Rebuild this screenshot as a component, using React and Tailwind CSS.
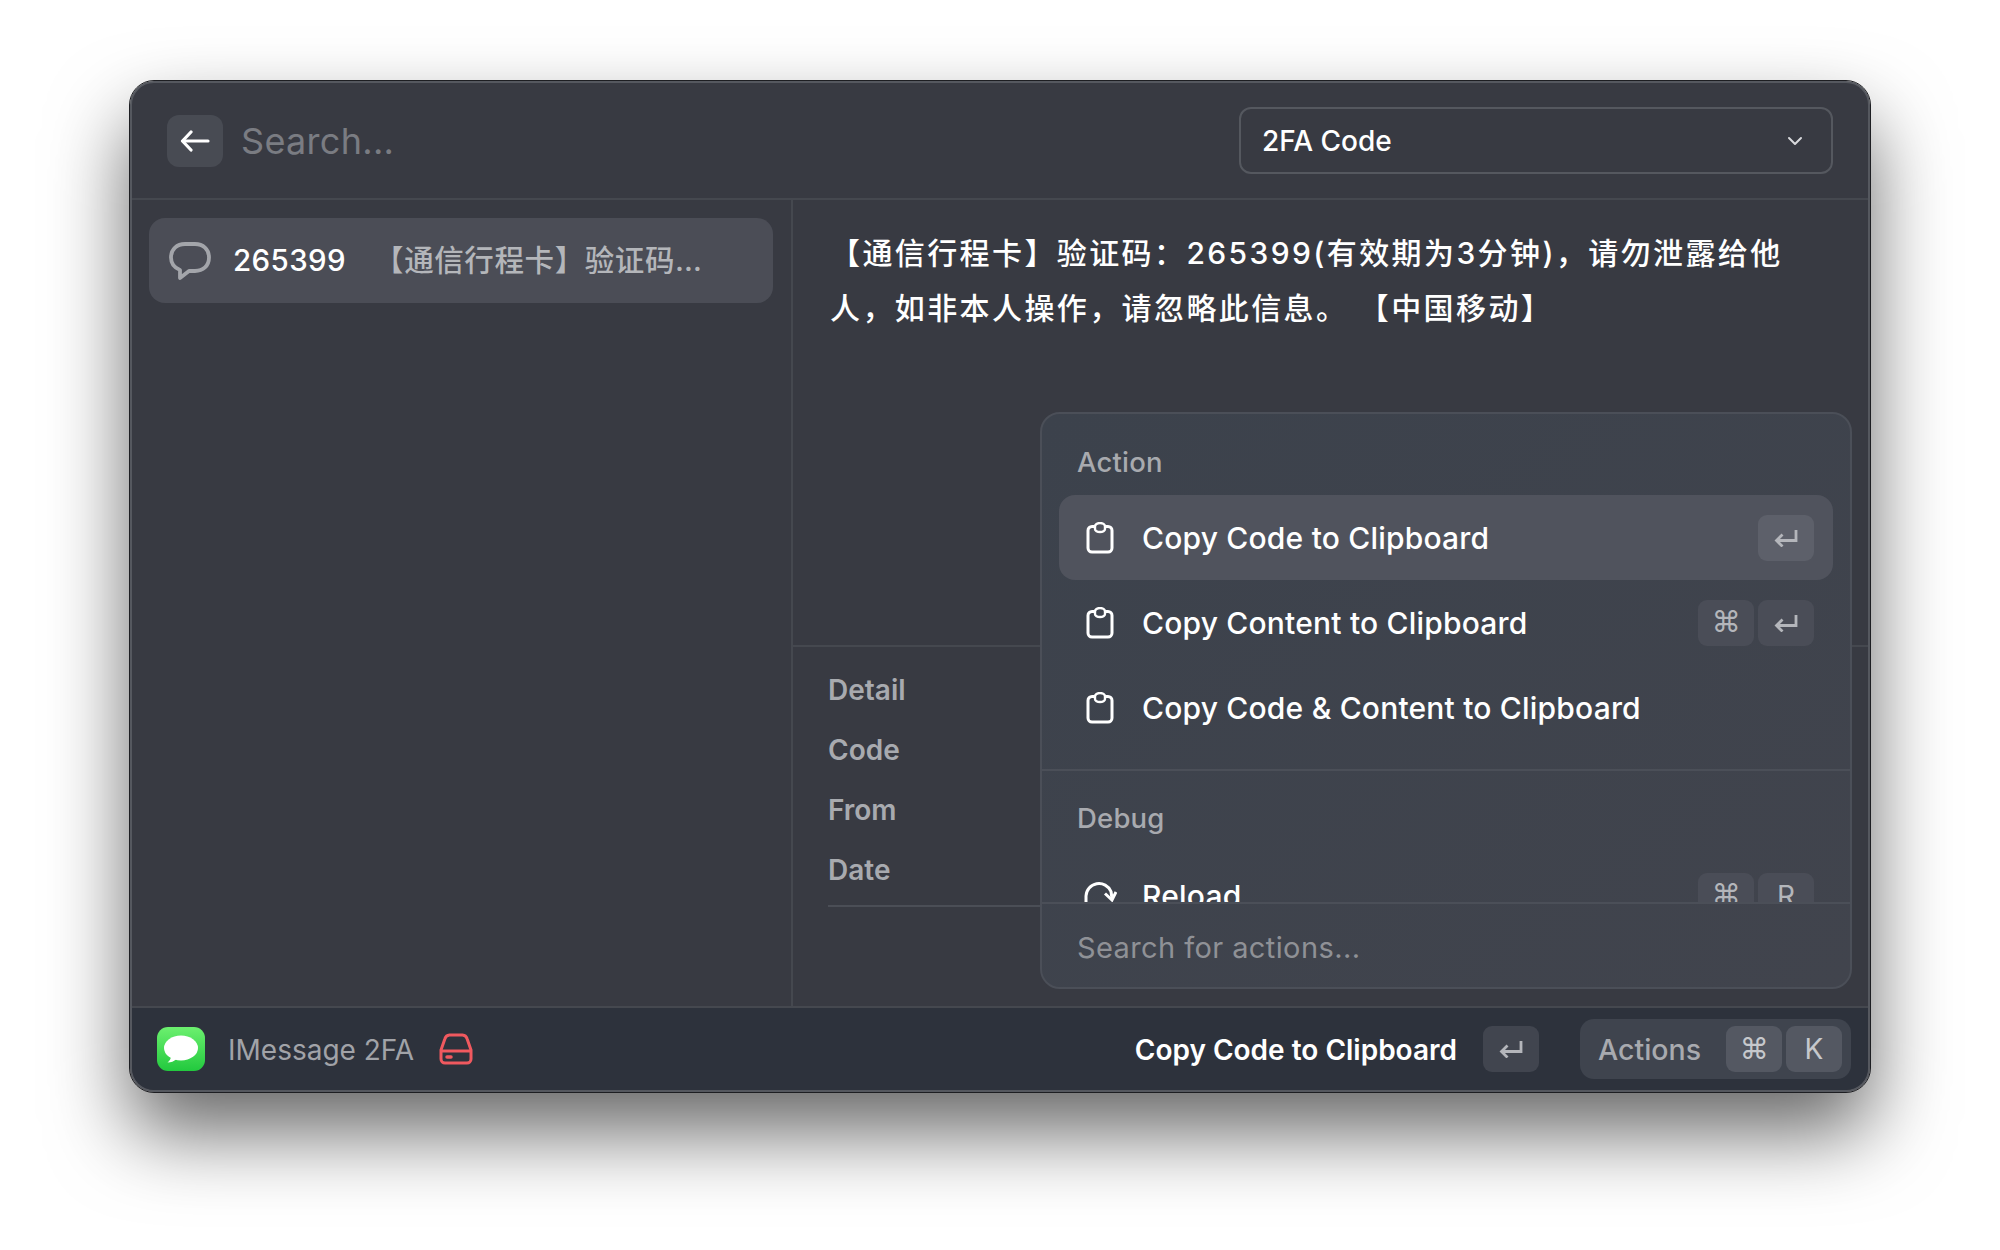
import { ChevronDown } from "lucide-react";

const FONT = "font-['Inter','Noto_Sans_CJK_SC',sans-serif]";

function ClipboardIcon() {
  return (
    <svg width="30" height="32" viewBox="0 0 30 32" fill="none" stroke="white" strokeWidth="3">
      <path d="M10 4.500H7a4 4 0 0 0-4 4V26a4 4 0 0 0 4 4h16a4 4 0 0 0 4-4V8.500a4 4 0 0 0-4-4h-3" />
      <path d="M10 4.500a5 3.500 0 0 1 10 0V7a5 3 0 0 1-10 0z" strokeWidth="2.400" />
    </svg>
  );
}

function ReturnIcon() {
  return (
    <svg width="24" height="18" viewBox="0 0 24 18" fill="none" stroke="#b4b6bb" strokeWidth="2.800">
      <path d="M22 1v10.500H3" />
      <path d="M8.500 5.500 2.500 11.500l6 6" />
    </svg>
  );
}

function Kbd({ children, className = "bg-[#4a4d57] text-[#b4b6bb]" }) {
  return (
    <div className={`w-[56px] h-[46px] rounded-[9px] flex items-center justify-center text-[28px] ${className}`}>
      {children}
    </div>
  );
}

function Cmd() {
  return <span className="font-['DejaVu_Sans',sans-serif] text-[29px] leading-none">⌘</span>;
}

function ActionRow({ label, active, children, icon }) {
  return (
    <div className={`h-[85px] rounded-[16px] flex items-center pl-[26px] pr-[19px] ${active ? "bg-[#50535d]" : ""}`}>
      {icon || <ClipboardIcon />}
      <span className="ml-[27px] pt-[2px] text-[30px] font-medium tracking-[0.2px] text-white flex-1">{label}</span>
      <div className="flex gap-[4px]">{children}</div>
    </div>
  );
}

function ActionsPopup() {
  return (
    <div className="absolute left-[908px] top-[329px] w-[812px] h-[577px] rounded-[20px] border-2 border-[#4b4f58] bg-gradient-to-br from-[#3c424c] to-[#41444d] flex flex-col overflow-hidden">
      <div className="h-[488px] overflow-hidden px-[17px]">
        <div className="h-[81px] pl-[18px] pt-[32px] text-[27.500px] leading-[32px] font-medium tracking-[0.2px] text-[#a8aaaf]">Action</div>
        <ActionRow label="Copy Code to Clipboard" active>
          <Kbd className="bg-[#5d606a] text-[#b4b6bb]"><ReturnIcon /></Kbd>
        </ActionRow>
        <ActionRow label="Copy Content to Clipboard">
          <Kbd><Cmd /></Kbd>
          <Kbd><ReturnIcon /></Kbd>
        </ActionRow>
        <ActionRow label="Copy Code & Content to Clipboard" />
        <div className="h-[2px] mt-[19px] -mx-[17px] bg-[#4b4f58]" />
        <div className="h-[82px] pl-[18px] pt-[31px] text-[27.500px] leading-[32px] font-medium tracking-[0.2px] text-[#a8aaaf]">Debug</div>
        <ActionRow
          label="Reload"
          icon={
            <svg width="34" height="34" viewBox="0 0 34 34" fill="none" stroke="white" strokeWidth="3" className="-ml-[2px] -mr-[2px]">
              <path d="M3 28V17a13 13 0 0 1 25-4.500l1 7" />
              <path d="M22 14.500l7 6.500 4-8" />
            </svg>
          }
        >
          <Kbd><Cmd /></Kbd>
          <Kbd>R</Kbd>
        </ActionRow>
      </div>
      <div className="flex-1 border-t-2 border-[#4b4f58] pl-[35px] pt-[4px] flex items-center text-[29px] tracking-[0.4px] text-[#8f9196]">
        Search for actions...
      </div>
    </div>
  );
}

export default function App() {
  return (
    <div className={`w-[2000px] h-[1250px] bg-white pt-[81px] ${FONT}`}>
      <div className="relative mx-auto w-[1740px] h-[1011px] rounded-[24px] border-2 border-[#55585f] outline outline-1 outline-[#1d1e22] bg-[#383a42] shadow-[0_40px_80px_rgba(0,0,0,0.6)] flex flex-col overflow-hidden">
        {/* Header */}
        <header className="h-[117px] shrink-0 border-b-2 border-[#45484f] flex items-center px-[35px]">
          <div className="w-[56px] h-[52px] rounded-[12px] bg-[#484b53] flex items-center justify-center">
            <svg width="30" height="22" viewBox="0 0 30 22" fill="none" stroke="white" strokeWidth="3.200" strokeLinecap="round" strokeLinejoin="round">
              <path d="M28 11H3" />
              <path d="M11 2 2.500 11l8.500 9" />
            </svg>
          </div>
          <div className="flex-1 ml-[18px] text-[36px] tracking-[0.3px] text-[#7a7c82]">Search...</div>
          <div className="w-[594px] h-[67px] rounded-[12px] border-2 border-[#55585f] flex items-center justify-between pl-[21px] pr-[24px] text-[28px] font-medium text-white">
            <span>2FA Code</span>
            <ChevronDown size={24} strokeWidth={2} color="#d8d9dc" />
          </div>
        </header>

        {/* Body */}
        <div className="flex-1 flex min-h-0">
          <aside className="w-[661px] shrink-0 border-r-2 border-[#45484f] px-[17px] pt-[18px]">
            <div className="h-[85px] w-[624px] rounded-[16px] bg-[#4b4d56] flex items-center pl-[20px]">
              <svg width="42" height="38" viewBox="0 0 42 38" fill="none" stroke="#a3a5aa" strokeWidth="3.800" strokeLinejoin="round">
                <path d="M16 2h10c8 0 14 5 14 13.500S34 29 26 29h-6l-9 7v-8C6 26 2 21.500 2 15.500 2 7 8 2 16 2z" />
              </svg>
              <span className="ml-[22px] text-[29.500px] font-medium tracking-[0.4px] text-white">265399</span>
              <span className="ml-[28px] w-[345px] truncate text-[29.500px] font-medium tracking-[0.6px] text-[#b4b6ba]">【通信行程卡】验证码：265399(有效期为3分钟)</span>
            </div>
          </aside>

          <main className="flex-1 flex flex-col">
            <div className="h-[447px] border-b-2 border-[#45484f] pl-[37px] pr-[80px] pt-[26px] text-[30px] leading-[55px] tracking-[2.400px] font-medium text-white">
              【通信行程卡】验证码：265399(有效期为3分钟)，请勿泄露给他人，如非本人操作，请忽略此信息。 【中国移动】
            </div>
            <div className="flex flex-col ml-[35px] mr-[36px] pt-[13px] text-[28px] font-semibold text-[#a8aaaf]">
              <div className="h-[60px] flex items-center">Detail</div>
              <div className="h-[60px] flex items-center">Code</div>
              <div className="h-[60px] flex items-center">From</div>
              <div className="h-[60px] flex items-center">Date</div>
              <div className="h-[2px] mt-[5px] bg-[#4b4e56]" />
            </div>
          </main>
        </div>

        {/* Footer */}
        <footer className="h-[84px] shrink-0 border-t-2 border-[#45484f] bg-[#2d323c] flex items-center pl-[25px] pr-[17px]">
          <svg width="48" height="44" viewBox="0 0 48 44">
            <defs>
              <linearGradient id="msg" x1="0" y1="0" x2="0" y2="1">
                <stop offset="0" stopColor="#6cf06f" />
                <stop offset="1" stopColor="#22c93e" />
              </linearGradient>
            </defs>
            <rect width="48" height="44" rx="11" fill="url(#msg)" />
            <ellipse cx="24" cy="21" rx="17" ry="12.500" fill="white" />
            <path d="M14 29c0 3-1.500 5-3.500 6.500 3.500 0 6.500-1 9-3.500z" fill="white" />
          </svg>
          <span className="ml-[23px] pt-[2px] text-[28px] text-[#a1a3a8]">IMessage 2FA</span>
          <svg width="34" height="32" viewBox="0 0 34 32" fill="none" stroke="#f0595f" strokeWidth="3" className="ml-[25px]">
            <path d="M2 17 6 5.500A5 5 0 0 1 10.500 2h13A5 5 0 0 1 28 5.500L32 17v9a4 4 0 0 1-4 4H6a4 4 0 0 1-4-4z" />
            <path d="M2 18h30" />
            <path d="M8 24h4" strokeWidth="3.500" strokeLinecap="round" />
          </svg>
          <span className="ml-auto pt-[2px] text-[28px] font-semibold text-white">Copy Code to Clipboard</span>
          <Kbd className="ml-[26px] bg-[#41454f] text-[#b4b6bb]"><ReturnIcon /></Kbd>
          <div className="ml-[41px] h-[60px] w-[271px] rounded-[14px] bg-[#3f444e] flex items-center pl-[18px] pr-[9px]">
            <span className="flex-1 pt-[2px] text-[28.500px] font-medium text-[#a8aaaf]">Actions</span>
            <div className="flex gap-[4px]">
              <Kbd className="bg-[#545862] text-[#c6c8cc]"><Cmd /></Kbd>
              <Kbd className="bg-[#545862] text-[#c6c8cc]">K</Kbd>
            </div>
          </div>
        </footer>

        <ActionsPopup />
      </div>
    </div>
  );
}
